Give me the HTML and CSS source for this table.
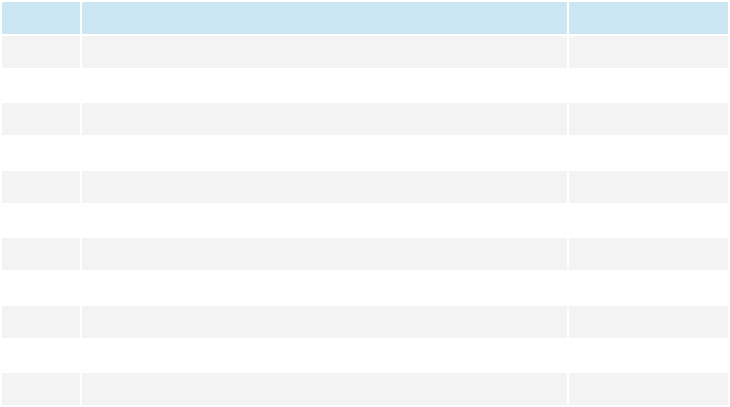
FILE: index.html
```html
<!DOCTYPE html>
<html lang="en">
<head>
    <meta charset="UTF-8">
    <meta name="viewport" content="width=device-width, initial-scale=1.0">
    <title>Table</title>
    <link rel="stylesheet" href="styles.css">
</head>
<body>
    <table class="grid">
        <colgroup>
            <col class="col-a">
            <col class="col-b">
            <col class="col-c">
        </colgroup>
        <thead>
            <tr><th></th><th></th><th></th></tr>
        </thead>
        <tbody>
            <tr><td></td><td></td><td></td></tr>
            <tr><td></td><td></td><td></td></tr>
            <tr><td></td><td></td><td></td></tr>
            <tr><td></td><td></td><td></td></tr>
            <tr><td></td><td></td><td></td></tr>
            <tr><td></td><td></td><td></td></tr>
            <tr><td></td><td></td><td></td></tr>
            <tr><td></td><td></td><td></td></tr>
            <tr><td></td><td></td><td></td></tr>
            <tr><td></td><td></td><td></td></tr>
            <tr><td></td><td></td><td></td></tr>
        </tbody>
    </table>
</body>
</html>
```

FILE: styles.css
```css
body {
    margin: 0;
    font-family: "Liberation Sans", Arial, sans-serif;
    font-size: 14px;
    background: #ffffff;
}
.grid {
    width: 100%;
    table-layout: fixed;
    border-collapse: separate;
    border-spacing: 2px;
}
.col-a {
    width: 78px;
}
.col-c {
    width: 159px;
}
.grid th,
.grid td {
    height: 31.75px;
    padding: 0;
}
.grid th {
    background: #cce7f4;
}
.grid tbody tr:nth-child(odd) td {
    background: #f3f3f3;
}
```
